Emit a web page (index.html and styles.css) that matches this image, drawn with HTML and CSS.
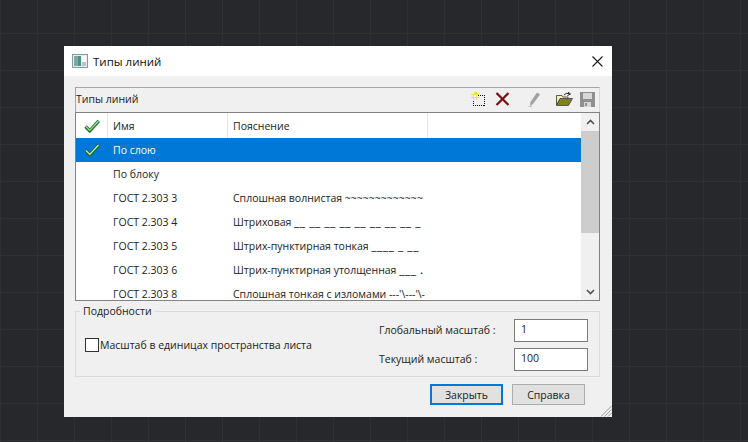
FILE: index.html
```html
<!DOCTYPE html>
<html lang="en">
<head>
    <meta charset="UTF-8">
    <meta name="viewport" content="width=device-width, initial-scale=1.0">
    <title>Типы линий</title>
    <link rel="stylesheet" href="styles.css">
</head>
<body>
    <div class="desktop">
        <div class="dialog">
            <div class="titlebar">
                <svg class="title-icon" width="16" height="14" viewBox="0 0 16 14">
                    <rect x="0.5" y="0.5" width="15" height="13" fill="#e8eeee" stroke="#8a9a9c"/>
                    <rect x="2" y="2" width="7" height="10" fill="#4f8f88"/>
                    <rect x="2" y="2" width="4" height="10" fill="#7fa9a8"/>
                    <rect x="10" y="2" width="4" height="10" fill="#fafafa"/>
                    <rect x="10" y="8" width="4" height="4" fill="#b9c6c8"/>
                </svg>
                <span class="title-text">Типы линий</span>
                <svg class="close-icon" width="11" height="11" viewBox="0 0 11 11">
                    <path d="M0.5 0.5 L10.5 10.5 M10.5 0.5 L0.5 10.5" stroke="#1a1a1a" stroke-width="1.1" fill="none"/>
                </svg>
            </div>

            <div class="content">
                <div class="toolbar">
                    <span class="toolbar-label">Типы линий</span>
                    <div class="toolbar-icons">
                        <svg class="tool tool-new" width="15" height="14" viewBox="0 0 15 14" shape-rendering="crispEdges">
                            <rect x="2.5" y="3.5" width="11" height="10" fill="none" stroke="#111" stroke-dasharray="1 1"/>
                            <path d="M5 0 H6 V2 H8 V3 H6 V5 H8 V6 H6 V8 H5 V6 H3 V8 H2 V6 H0 V5 H2 V3 H0 V2 H3 V0 Z" fill="#e6df5a"/>
                            <rect x="3" y="3" width="2" height="2" fill="#fffbd0"/>
                        </svg>
                        <svg class="tool tool-delete" width="15" height="14" viewBox="0 0 15 14">
                            <path d="M1.5 1 L13.5 13 M13.5 1 L1.5 13" stroke="#7a1010" stroke-width="2.2" fill="none"/>
                        </svg>
                        <svg class="tool tool-edit" width="13" height="15" viewBox="0 0 13 15">
                            <path d="M9 0.5 L12 2.5 L5 12 L2 14 L2.5 10 Z" fill="#a2a2a2"/>
                            <path d="M0.5 14.5 L4 14.5" stroke="#c0c0c0"/>
                        </svg>
                        <svg class="tool tool-open" width="17" height="14" viewBox="0 0 17 14">
                            <path d="M0.5 13 V3.5 H6 L7 5 H12 V7 H4 L0.5 13 Z" fill="#f7f2a0" stroke="#333" stroke-width="0.8"/>
                            <path d="M0.5 13.5 L4 6.5 H16.5 L12.5 13.5 Z" fill="#808020" stroke="#444" stroke-width="0.8"/>
                            <path d="M8 3 Q10 0.5 13 1.5 M12 0 L14.5 2 L11.5 3.5" stroke="#222" stroke-width="1" fill="none"/>
                        </svg>
                        <svg class="tool tool-save" width="15" height="15" viewBox="0 0 15 15">
                            <path d="M0 0 H15 V15 H0 Z" fill="#8f8f8f"/>
                            <rect x="3" y="1" width="9" height="6" fill="#d8d8d8"/>
                            <rect x="4" y="10" width="7" height="5" fill="#d8d8d8"/>
                            <rect x="5" y="11" width="2" height="3" fill="#8f8f8f"/>
                        </svg>
                    </div>
                </div>

                <div class="list">
                    <div class="list-main">
                        <div class="row list-header">
                            <div class="cell cell-check">
                                <svg width="16" height="14" viewBox="0 0 16 14">
                                    <path d="M1.5 7.5 L5.8 11.8 L14.8 1.8" stroke="#1c6a2c" stroke-width="3.4" fill="none"/>
                                    <path d="M2 7.5 L5.8 11.3 L14.5 2" stroke="#a6e4a2" stroke-width="1.2" fill="none"/>
                                </svg>
                            </div>
                            <div class="cell">Имя</div>
                            <div class="cell">Пояснение</div>
                            <div class="cell"></div>
                        </div>
                        <div class="row row-selected">
                            <div class="cell cell-check">
                                <svg width="16" height="14" viewBox="0 0 16 14">
                                    <path d="M1.5 7.5 L5.8 11.8 L14.8 1.8" stroke="#1c6a2c" stroke-width="3.4" fill="none"/>
                                    <path d="M2 7.5 L5.8 11.3 L14.5 2" stroke="#c4f4bc" stroke-width="1.2" fill="none"/>
                                </svg>
                            </div>
                            <div class="cell">По слою</div>
                            <div class="cell"></div>
                        </div>
                        <div class="row"><div class="cell cell-check"></div><div class="cell">По блоку</div><div class="cell"></div></div>
                        <div class="row"><div class="cell cell-check"></div><div class="cell">ГОСТ 2.303 3</div><div class="cell">Сплошная волнистая ~~~~~~~~~~~~~</div></div>
                        <div class="row"><div class="cell cell-check"></div><div class="cell">ГОСТ 2.303 4</div><div class="cell">Штриховая <span class="dashes">__ __ __ __ __ __ __ __ _</span></div></div>
                        <div class="row"><div class="cell cell-check"></div><div class="cell">ГОСТ 2.303 5</div><div class="cell">Штрих-пунктирная тонкая <span class="dashes">____ _ __</span></div></div>
                        <div class="row"><div class="cell cell-check"></div><div class="cell">ГОСТ 2.303 6</div><div class="cell">Штрих-пунктирная утолщенная <span class="dashes">___ .</span></div></div>
                        <div class="row row-last"><div class="cell cell-check"></div><div class="cell">ГОСТ 2.303 8</div><div class="cell">Сплошная тонкая с изломами ---'\---'\-</div></div>
                    </div>
                    <div class="scrollbar">
                        <div class="scroll-btn">
                            <svg width="9" height="6" viewBox="0 0 9 6"><path d="M1 5 L4.5 1.5 L8 5" stroke="#505050" stroke-width="1.6" fill="none"/></svg>
                        </div>
                        <div class="scroll-track"><div class="scroll-thumb"></div></div>
                        <div class="scroll-btn">
                            <svg width="9" height="6" viewBox="0 0 9 6"><path d="M1 1 L4.5 4.5 L8 1" stroke="#505050" stroke-width="1.6" fill="none"/></svg>
                        </div>
                    </div>
                </div>

                <fieldset class="details">
                    <legend>Подробности</legend>
                    <label class="check-label"><span class="checkbox"></span>Масштаб в единицах пространства листа</label>
                    <div class="scales">
                        <div class="scale-row"><span>Глобальный масштаб :</span><div class="scale-input">1</div></div>
                        <div class="scale-row"><span>Текущий масштаб :</span><div class="scale-input">100</div></div>
                    </div>
                </fieldset>

                <div class="buttons">
                    <button class="btn btn-default">Закрыть</button>
                    <button class="btn">Справка</button>
                </div>
            </div>

            <svg class="grip" width="12" height="12" viewBox="0 0 12 12">
                <path d="M11.5 1 L1 11.5 M11.5 4.5 L4.5 11.5 M11.5 8 L8 11.5" stroke="#9a9a9a" fill="none"/>
            </svg>
        </div>
    </div>
</body>
</html>
```

FILE: styles.css
```css
* {
    box-sizing: border-box;
}
body {
    margin: 0;
    font-family: "Open Sans", "Noto Sans", sans-serif;
    font-size: 10.5px;
    color: #222;
}
.desktop {
    position: relative;
    width: 748px;
    height: 442px;
    overflow: hidden;
    background-color: #26282c;
    background-image:
        linear-gradient(#2e3034 1px, transparent 1px),
        linear-gradient(90deg, #2e3034 1px, transparent 1px);
    background-size: 37px 37px;
    background-position: 0 33px;
}
.dialog {
    position: absolute;
    left: 64px;
    top: 46px;
    width: 548px;
    height: 371px;
    background: #f0f0f0;
}
.titlebar {
    display: flex;
    align-items: center;
    height: 30px;
    padding: 0 9px 0 8px;
    background: #fff;
}
.title-text {
    margin-left: 5px;
    font-size: 11.5px;
    color: #111;
}
.close-icon {
    margin-left: auto;
}
.content {
    padding: 11px 12px 0 11px;
}
.toolbar {
    display: flex;
    align-items: center;
    height: 25px;
    padding-bottom: 2px;
    border-top: 1px solid #a5a5a5;
    border-left: 1px solid #a5a5a5;
    border-right: 1px solid #d8d8d8;
}
.toolbar-icons {
    display: flex;
    align-items: center;
    margin-left: auto;
    padding-right: 4px;
}
.tool-delete {
    margin-left: 9px;
}
.tool-edit {
    margin-left: 18px;
}
.tool-open {
    margin-left: 15px;
}
.tool-save {
    margin-left: 7px;
}
.list {
    display: flex;
    height: 189px;
    border: 1px solid #828282;
    background: #fff;
    overflow: hidden;
}
.list-main {
    flex: 1;
    overflow: hidden;
}
.row {
    display: grid;
    grid-template-columns: 32px 120px 200px 1fr;
    align-items: center;
    height: 24px;
}
.row-last {
    align-items: start;
    height: 18px;
    padding-top: 6px;
    line-height: 12px;
}
.cell {
    padding-left: 5px;
    white-space: nowrap;
}
.cell-check {
    display: flex;
    justify-content: center;
    padding-left: 0;
}
.dashes {
    font-size: 12px;
    line-height: 1;
    letter-spacing: 0.5px;
}
.list-header {
    height: 25px;
    align-items: stretch;
}
.list-header .cell {
    display: flex;
    align-items: center;
    border-right: 1px solid #e5e5e5;
}
.list-header .cell:last-child {
    border-right: none;
}
.list-header .cell-check {
    justify-content: center;
}
.row-selected {
    background: #0078d7;
    color: #fff;
}
.scrollbar {
    display: flex;
    flex-direction: column;
    width: 18px;
    background: #f0f0f0;
}
.scroll-btn {
    display: flex;
    align-items: center;
    justify-content: center;
    flex: none;
    height: 17px;
}
.scroll-track {
    flex: 1;
}
.scroll-thumb {
    height: 102px;
    margin-top: 1px;
    background: #cdcdcd;
}
.details {
    display: flex;
    align-items: center;
    justify-content: space-between;
    height: 73px;
    margin: 3px 0 0;
    padding: 0 11px 5px 9px;
    border: 1px solid #dcdcdc;
    min-width: 0;
}
.details legend {
    margin-left: -5px;
    padding: 0 3px 0 3px;
}
.check-label {
    display: flex;
    align-items: center;
}
.checkbox {
    width: 14px;
    height: 14px;
    margin-right: 1px;
    border: 1px solid #333;
    background: #fff;
}
.scales {
    display: flex;
    flex-direction: column;
    gap: 6px;
}
.scale-row {
    display: flex;
    align-items: center;
    justify-content: space-between;
    width: 209px;
}
.scale-input {
    width: 74px;
    height: 23px;
    padding: 2px 6px;
    border: 1px solid #7a7a7a;
    background: #fff;
}
.buttons {
    display: flex;
    justify-content: flex-end;
    gap: 9px;
    margin-top: 7px;
    padding-right: 15px;
}
.btn {
    width: 73px;
    height: 21px;
    padding: 0;
    font-family: inherit;
    font-size: 10.5px;
    color: #222;
    background: #e1e1e1;
    border: 1px solid #adadad;
}
.btn-default {
    border: 2px solid #0078d7;
}
.grip {
    position: absolute;
    right: 0;
    bottom: 0;
}
```
